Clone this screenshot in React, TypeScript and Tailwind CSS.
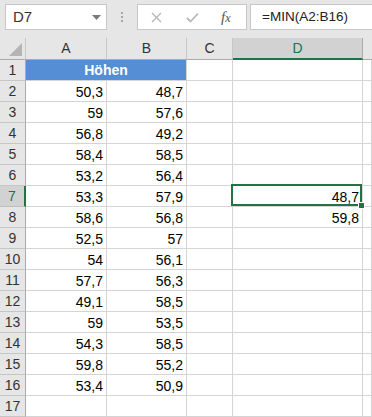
import React from "react";

const rows: [string, string, string][] = [
  ["50,3", "48,7", ""],
  ["59", "57,6", ""],
  ["56,8", "49,2", ""],
  ["58,4", "58,5", ""],
  ["53,2", "56,4", ""],
  ["53,3", "57,9", "48,7"],
  ["58,6", "56,8", "59,8"],
  ["52,5", "57", ""],
  ["54", "56,1", ""],
  ["57,7", "56,3", ""],
  ["49,1", "58,5", ""],
  ["59", "53,5", ""],
  ["54,3", "58,5", ""],
  ["59,8", "55,2", ""],
  ["53,4", "50,9", ""],
  ["", "", ""],
];

const font = { fontFamily: '"Liberation Sans", Arial, sans-serif' };

function RowHead({ n, sel }: { n: number; sel?: boolean }) {
  return (
    <div
      className={
        "box-border flex items-center justify-center border-b border-r text-[14px] leading-[20px] " +
        (sel
          ? "bg-[#d2d2d2] border-b-[#bdbdbd] border-r-2 border-r-[#217346] text-[#217346]"
          : "bg-[#e6e6e6] border-b-[#c6c6c6] border-r-[#ababab] text-[#333]")
      }
    >
      {n}
    </div>
  );
}

function Cell({ v, children }: { v?: string; children?: React.ReactNode }) {
  return (
    <div className="relative box-border flex items-center justify-end border-b border-r border-[#d4d4d4] bg-white pr-[3px] pt-px text-[14px] leading-[20px] text-black">
      {v}
      {children}
    </div>
  );
}

export default function App() {
  return (
    <div className="h-[417px] w-[372px] overflow-hidden bg-white" style={font}>
      {/* Toolbar */}
      <div className="flex h-[38px] items-start bg-[#e6e6e6] pt-[4px]">
        <div className="ml-[5px] box-border flex h-[26px] w-[102px] items-center border border-[#c6c6c6] bg-white pl-[7px] pr-[5px]">
          <span className="flex-1 text-[15px] text-[#333]">D7</span>
          <svg width="9" height="5" viewBox="0 0 9 5">
            <polygon points="0,0 9,0 4.5,5" fill="#7a7a7a" />
          </svg>
        </div>
        <div className="ml-[14px] mt-[8px] flex flex-col gap-[2px]">
          <div className="h-[2px] w-[2px] bg-[#a6a6a6]" />
          <div className="h-[2px] w-[2px] bg-[#a6a6a6]" />
          <div className="h-[2px] w-[2px] bg-[#a6a6a6]" />
        </div>
        <div className="ml-[14px] box-border flex h-[26px] w-[110px] items-center border border-[#c6c6c6] bg-white">
          <svg className="ml-[13px]" width="11" height="11" viewBox="0 0 11 11">
            <path d="M1 1 L10 10 M10 1 L1 10" stroke="#b8b8b8" strokeWidth="1.4" />
          </svg>
          <svg className="ml-[24px]" width="13" height="11" viewBox="0 0 13 11">
            <path d="M1 6 L4.5 9.5 L12 1.5" stroke="#b8b8b8" strokeWidth="1.8" fill="none" />
          </svg>
          <span
            className="ml-[22px] text-[15px] italic text-[#555]"
            style={{ fontFamily: '"Liberation Serif", "Times New Roman", serif' }}
          >
            f<span className="text-[12px]">x</span>
          </span>
        </div>
        <div className="ml-[3px] box-border flex h-[26px] flex-1 items-center border border-r-0 border-[#c6c6c6] bg-white pl-[11px] text-[13.5px] text-[#222]">
          =MIN(A2:B16)
        </div>
      </div>

      {/* Grid */}
      <div className="grid grid-cols-[26px_81px_80px_46px_130px_1fr] grid-rows-[22px_repeat(17,21px)]">
        {/* header row */}
        <div className="relative box-border border-b border-r border-b-[#ababab] border-r-[#c6c6c6] bg-[#e6e6e6]">
          <svg className="absolute bottom-[3px] right-[3px]" width="13" height="13" viewBox="0 0 13 13">
            <polygon points="13,0 13,13 0,13" fill="#b4b4b4" />
          </svg>
        </div>
        <div className="box-border flex items-center justify-center border-b border-r border-b-[#ababab] border-r-[#c6c6c6] bg-[#e6e6e6] text-[14px] text-[#333]">A</div>
        <div className="box-border flex items-center justify-center border-b border-r border-b-[#ababab] border-r-[#c6c6c6] bg-[#e6e6e6] text-[14px] text-[#333]">B</div>
        <div className="box-border flex items-center justify-center border-b border-r border-b-[#ababab] border-r-[#c6c6c6] bg-[#e6e6e6] text-[14px] text-[#333]">C</div>
        <div className="box-border flex items-center justify-center border-b-2 border-r border-b-[#217346] border-r-[#ababab] bg-[#d2d2d2] text-[14px] text-[#217346]">D</div>
        <div className="box-border border-b border-b-[#ababab] bg-[#e6e6e6]" />

        {/* row 1 */}
        <RowHead n={1} />
        <div className="col-span-2 box-border flex items-center justify-center border-b border-r border-b-[#d4d4d4] border-r-[#d4d4d4] bg-[#558ed5] text-[14px] font-bold leading-[20px] text-white">
          Höhen
        </div>
        <Cell />
        <Cell />
        <Cell />

        {rows.map((r, i) => {
          const n = i + 2;
          return (
            <React.Fragment key={n}>
              <RowHead n={n} sel={n === 7} />
              <Cell v={r[0]} />
              <Cell v={r[1]} />
              <Cell />
              {n === 7 ? (
                <Cell v={r[2]}>
                  <div className="pointer-events-none absolute -left-[2px] -top-[2px] bottom-0 right-0 z-10 border-2 border-[#217346]" />
                  <div className="absolute -bottom-[3px] -right-[3px] z-20 box-border h-[7px] w-[7px] border border-white bg-[#217346]" />
                </Cell>
              ) : (
                <Cell v={r[2]} />
              )}
              <Cell />
            </React.Fragment>
          );
        })}
      </div>
    </div>
  );
}
